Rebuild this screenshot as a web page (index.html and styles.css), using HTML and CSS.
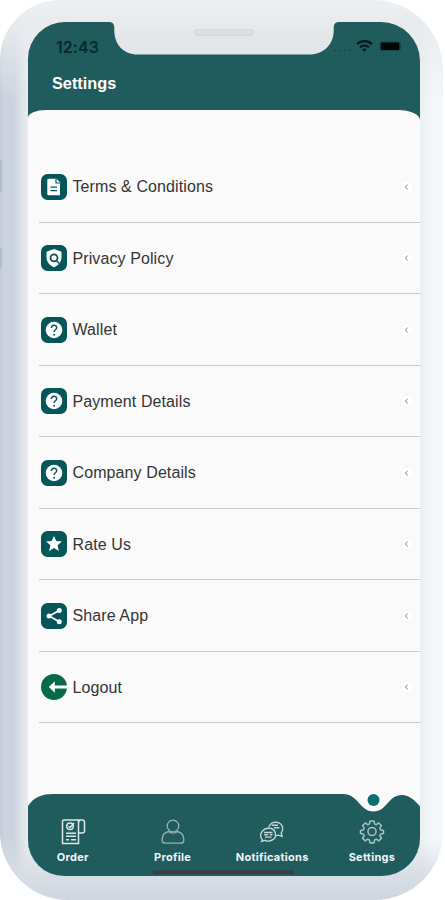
FILE: index.html
```html
<!DOCTYPE html>
<html lang="en">
<head>
<meta charset="utf-8">
<title>Settings</title>
<link rel="stylesheet" href="styles.css">
</head>
<body>
<svg class="defs" width="0" height="0" aria-hidden="true">
  <symbol id="chevron" viewBox="0 0 14 14"><circle cx="7" cy="7" r="6.2" fill="#fff" stroke="#f3f4f4" stroke-width=".7"/><path d="M7.6 4.6 5.5 7l2.1 2.5" fill="none" stroke="#858585" stroke-width="1"/></symbol>
  <symbol id="help" viewBox="0 0 26 26"><rect width="26" height="26" rx="6.5" fill="#055659"/><circle cx="13" cy="13" r="8.3" fill="#fff"/><path d="M10.4 11c0-3.7 5.3-3.5 5.3-.3 0 2-2.6 2.2-2.6 4.3" fill="none" stroke="#055659" stroke-width="1.5"/><circle cx="13.1" cy="17.8" r="1" fill="#055659"/></symbol>
</svg>
<div class="phone">
  <main class="screen">
    <svg class="notch" viewBox="0 0 230 33" width="230" height="33"><defs><linearGradient id="metal" x2="0" y2="1"><stop stop-color="#e8ebee"/><stop offset=".5" stop-color="#e3e6e9"/><stop offset="1" stop-color="#e2e6ea"/></linearGradient></defs><path d="M0 0c4 0 5 2 5.300 6v3C5.500 22 14 32.500 29 32.500h171c15 0 24.500-10.500 24.700-23.500V6c.3-4 1.300-6 5.300-6z" fill="url(#metal)"/><rect x="85.500" y="7.500" width="59" height="6" rx="3" fill="#dbdee0" stroke="#d3d6d9"/></svg>
    <header class="header">
      <div class="status">
        <time>12:43</time>
        <svg width="70" height="16" viewBox="0 0 70 16"><g fill="#153f43"><circle cx="2" cy="12.500" r=".8"/><circle cx="7" cy="12.500" r=".8"/><circle cx="12" cy="12.500" r=".8"/><circle cx="17" cy="12.500" r=".8"/></g><g fill="none" stroke="#07191d" stroke-width="2.200"><path d="M24 6.100c4.300-3.900 10.700-3.900 15 0M27 9.300c2.600-2.300 6.400-2.300 9 0"/></g><path d="m29.200 11.300 2.300 2.500 2.300-2.500c-1.300-1.200-3.300-1.200-4.600 0z" fill="#07191d"/><rect x="46.500" y="3.500" width="21.500" height="9.500" rx="2.500" fill="#17484b"/><rect x="47.800" y="4.500" width="18.500" height="7.500" rx="1" fill="#020607"/></svg>
      </div>
      <h1>Settings</h1>
    </header>
    <section class="content">
      <ul class="list">
        <li><svg class="icon" viewBox="0 0 26 26"><rect width="26" height="26" rx="6.500" fill="#055659"/><path d="M7.500 4.800h8L19 8.300v12.900H7.500q-1.200 0-1.200-1.200V6q0-1.200 1.200-1.200z" fill="#fff"/><path d="M15 5v4h4M9.500 13.200h6.500M9.500 16.700h6.500" fill="none" stroke="#055659" stroke-width="1.200"/></svg><span>Terms &amp; Conditions</span><svg class="go"><use href="#chevron"/></svg></li>
        <li><svg class="icon" viewBox="0 0 26 26"><rect width="26" height="26" rx="6.500" fill="#055659"/><path d="m13 4 7.500 2.700v5.600c0 4.500-3 8-7.500 10-4.500-2-7.500-5.500-7.500-10V6.700z" fill="#fff"/><circle cx="13" cy="12.800" r="3.500" fill="none" stroke="#055659" stroke-width="1.800"/><path d="m15 15 3.200 3.500" stroke="#055659" stroke-width="1.500"/></svg><span>Privacy Policy</span><svg class="go"><use href="#chevron"/></svg></li>
        <li><svg class="icon"><use href="#help"/></svg><span>Wallet</span><svg class="go"><use href="#chevron"/></svg></li>
        <li><svg class="icon"><use href="#help"/></svg><span>Payment Details</span><svg class="go"><use href="#chevron"/></svg></li>
        <li><svg class="icon"><use href="#help"/></svg><span>Company Details</span><svg class="go"><use href="#chevron"/></svg></li>
        <li><svg class="icon" viewBox="0 0 26 26"><rect width="26" height="26" rx="6.500" fill="#055659"/><path d="m13 4.900 2.300 5.200 5.600.5-4.300 3.700 1.300 5.600-4.900-2.900-4.900 2.900 1.300-5.600-4.300-3.700 5.600-.5z" fill="#fff"/></svg><span>Rate Us</span><svg class="go"><use href="#chevron"/></svg></li>
        <li><svg class="icon" viewBox="0 0 26 26"><rect width="26" height="26" rx="6.500" fill="#055659"/><path d="M18.200 7.500 8.300 13l9.900 5.800" fill="none" stroke="#fff" stroke-width="1.700"/><g fill="#fff"><circle cx="18.300" cy="7.500" r="2.500"/><circle cx="8" cy="13" r="2.500"/><circle cx="18.300" cy="18.800" r="2.500"/></g></svg><span>Share App</span><svg class="go"><use href="#chevron"/></svg></li>
        <li><svg class="icon" viewBox="0 0 26 26"><circle cx="13" cy="13" r="13" fill="#046a48"/><path d="m7.800 13 6-5.800v4.200H26v3.200H13.800v4.200z" fill="#fff"/></svg><span>Logout</span><svg class="go"><use href="#chevron"/></svg></li>
      </ul>
    </section>
    <nav class="tabs">
      <svg class="wave" viewBox="0 0 392 84" width="392" height="84"><path d="M0 14C6 5 14 2 25 2h290c15 0 17 17.500 30.500 17.500S360 3 374 3c7 0 14 6 18 11.500V84H0z" fill="#205b5e"/><circle cx="345.500" cy="8" r="6" fill="#0b706b"/><path d="M125 78.500h141v2.500q0 1-1 1H125z" fill="#3d3b3e"/></svg>
      <a><svg viewBox="0 0 26 27" fill="none" stroke="#dbe8e8" stroke-width="1.500"><path d="M3.500 2H22q2.500 0 2.500 2v9q0 2-2.500 2h-3.500M18.500 2v23.500H2.500V3.300Q2.500 2 3.800 2M19 4q0-2 1.500-2"/><circle cx="10" cy="8.300" r="3.300"/><path d="m8.500 8.300 1.500 1.300 4-4.500M6 15.300h10M6 18.300h10M6 21.800h3m2 0h5"/></svg><span>Order</span></a>
      <a><svg viewBox="0 0 26 27" fill="none" stroke="#95b3b3" stroke-width="1.300"><circle cx="13" cy="8" r="5.800"/><path d="M8.500 13.500C4.500 14.500 2.200 17.500 2.200 21.500v1q0 2.700 3 2.700h15.600q3 0 3-2.700v-1c0-4-2.300-7-6.300-8-2.500 2.200-6.500 2.200-9 0z"/></svg><span>Profile</span></a>
      <a><svg viewBox="-1 -1.500 28 29" fill="none" stroke="#c3d5d5" stroke-width="1.500"><path d="M9.500 8.500C11 .8 24.500 1 24.500 10q0 3-1.600 4.700l1 3.500-4-1.300q-1.400.6-3.200.6"/><path d="M3 22.500c-5.500-6 .2-13 6.500-13 8.500 0 9.800 11 2.500 13.200-2.800 1-5.300.6-6.500-.2L1 24z"/><path d="M12.500 6.200h7M15 9h6M4.500 14h9M4.500 16.500h4m2 0h3M5.500 19h7" stroke-width="1.500"/></svg><span>Notifications</span></a>
      <a><svg viewBox="-1.500 -1.500 29 30" fill="none" stroke="#a3bfbf" stroke-width="1.700"><path stroke-linejoin="round" d="m10.800 1.800h4.400l.6 3.200 2.100.9 2.700-1.900 3 3-1.900 2.700.9 2.100 3.200.6v3.200l-3.200.6-.9 2.100 1.900 2.700-3 3-2.700-1.900-2.100.9-.6 3.200h-4.400l-.6-3.200-2.100-.9L5.400 24l-3-3 1.900-2.700-.9-2.100-3.200-.6v-3.200l3.200-.6.900-2.100L2.400 7l3-3 2.700 1.900 2.100-.9z"/><circle cx="13" cy="13.500" r="4.500"/></svg><span>Settings</span></a>
    </nav>
  </main>
</div>
</body>
</html>
```
FILE: styles.css
```css
* { box-sizing: border-box; }
body { margin: 0; background: #fff; font-family: "Liberation Sans", Arial, sans-serif; }
.defs { display: block; height: 0; }
.phone {
  width: 443px;
  height: 900px;
  padding: 22px 23px 24px 28px;
  border-radius: 60px 70px 68px 68px;
  background:
    linear-gradient(#b4bcc7, #b4bcc7) 0 160px / 2px 32px no-repeat,
    linear-gradient(#b4bcc7, #b4bcc7) 0 248px / 2px 20px no-repeat,
    linear-gradient(180deg, #edf0f3 0, #e8ebee 22px, rgba(237,240,243,0) 100px),
    linear-gradient(0deg, #d0d6df 0, #d7dde4 22px, rgba(215,221,228,0) 60px),
    linear-gradient(90deg, #c3cad4 0, #ccd3df 4px, #cbd3df 14px, #e6eaee 26px, #edf1f4 50px, #e9eef1 420px, #f6f9fb 434px, #f3f5f7 443px);
}
.screen {
  position: relative;
  display: flex;
  flex-direction: column;
  height: 854px;
  overflow: hidden;
  border-radius: 37px 39px 38px 36px;
  background: #205b5e;
}
.notch { position: absolute; top: 0; left: 81px; }
.header { height: 88px; padding: 16px 15px 0 24px; }
.status { display: flex; justify-content: space-between; align-items: flex-start; height: 34px; padding-left: 4px; }
.status time { color: #0c272c; font: 600 16px/18px Inter, sans-serif; letter-spacing: .05px; }
.status svg { margin-right: 2px; }
h1 { margin: 0; color: #fff; font: 700 16.300px/23px "Liberation Sans", Arial, sans-serif; }
.content { height: 684px; flex: none; background: #fafafa; border-radius: 18px 22px 0 0 / 8px 10px 0 0; padding: 41px 0 0 11px; }
.list { margin: 0; padding: 0; list-style: none; }
.list li { display: flex; align-items: center; height: 71.5px; padding: 1px 6px 0 1.500px; border-bottom: 1.500px solid #c9c9c9; color: #343434; font-size: 16px; }
.icon { width: 26px; height: 26px; flex: none; }
.list span { flex: 1; margin: 1px 0 0 6px; letter-spacing: .1px; }
.go { width: 14px; height: 14px; }
.tabs { position: relative; display: grid; grid-template-columns: repeat(4, 99.700px); height: 82px; flex: none; margin-left: -5px; background: #fafafa; padding-top: 24px; }
.wave { position: absolute; left: 5px; top: -2px; }
.tabs a { position: relative; display: flex; flex-direction: column; align-items: center; color: #f0f5f5; font: 700 11px/14px Inter, sans-serif; letter-spacing: .27px; }
.tabs a svg { width: 26px; height: 27px; margin-bottom: 5px; }
```
